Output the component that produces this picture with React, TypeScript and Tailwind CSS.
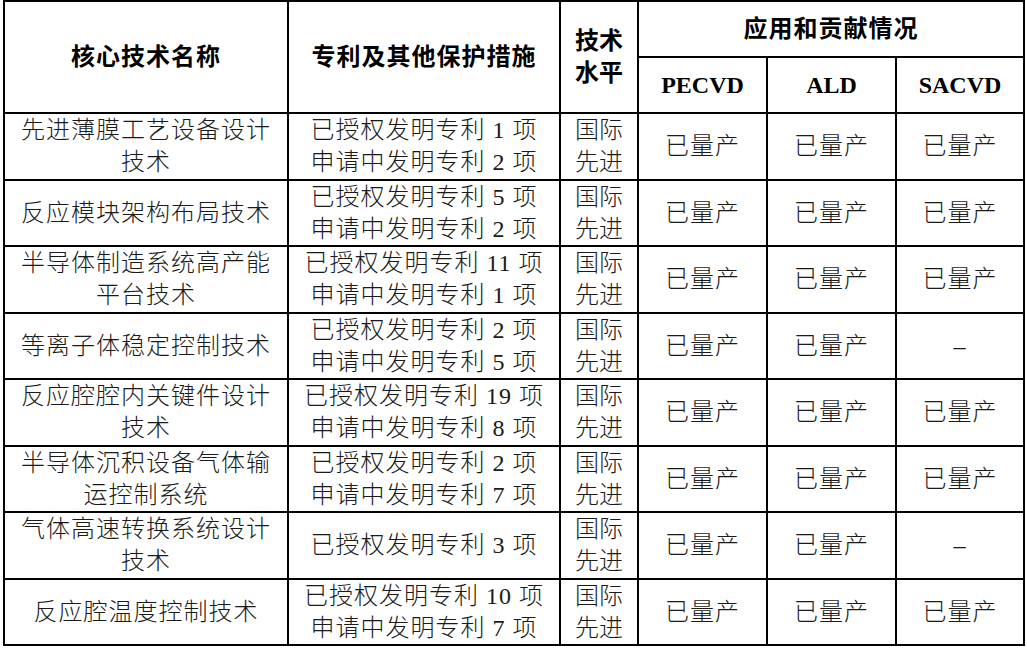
const FONT = "font-['Liberation_Serif','Noto_Sans_CJK_SC',serif]";

type Row = {
  name: string[];
  patents: string[];
  level: string[];
  apps: string[];
};

const ROWS: Row[] = [
  {
    name: ["先进薄膜工艺设备设计", "技术"],
    patents: ["已授权发明专利 1 项", "申请中发明专利 2 项"],
    level: ["国际", "先进"],
    apps: ["已量产", "已量产", "已量产"],
  },
  {
    name: ["反应模块架构布局技术"],
    patents: ["已授权发明专利 5 项", "申请中发明专利 2 项"],
    level: ["国际", "先进"],
    apps: ["已量产", "已量产", "已量产"],
  },
  {
    name: ["半导体制造系统高产能", "平台技术"],
    patents: ["已授权发明专利 11 项", "申请中发明专利 1 项"],
    level: ["国际", "先进"],
    apps: ["已量产", "已量产", "已量产"],
  },
  {
    name: ["等离子体稳定控制技术"],
    patents: ["已授权发明专利 2 项", "申请中发明专利 5 项"],
    level: ["国际", "先进"],
    apps: ["已量产", "已量产", "–"],
  },
  {
    name: ["反应腔腔内关键件设计", "技术"],
    patents: ["已授权发明专利 19 项", "申请中发明专利 8 项"],
    level: ["国际", "先进"],
    apps: ["已量产", "已量产", "已量产"],
  },
  {
    name: ["半导体沉积设备气体输", "运控制系统"],
    patents: ["已授权发明专利 2 项", "申请中发明专利 7 项"],
    level: ["国际", "先进"],
    apps: ["已量产", "已量产", "已量产"],
  },
  {
    name: ["气体高速转换系统设计", "技术"],
    patents: ["已授权发明专利 3 项"],
    level: ["国际", "先进"],
    apps: ["已量产", "已量产", "–"],
  },
  {
    name: ["反应腔温度控制技术"],
    patents: ["已授权发明专利 10 项", "申请中发明专利 7 项"],
    level: ["国际", "先进"],
    apps: ["已量产", "已量产", "已量产"],
  },
];

function Lines({ lines }: { lines: string[] }) {
  return (
    <>
      {lines.map((l, i) => (
        <span key={i} className="block whitespace-nowrap">
          {l}
        </span>
      ))}
    </>
  );
}

const cell =
  "flex flex-col items-center justify-center bg-white text-center leading-[32px]";

export default function App() {
  return (
    <div className={`min-h-[651px] w-[1027px] bg-white ${FONT} text-[24px] text-[#1a1a1a]`}>
      <div className="ml-[3px] grid w-[1022px] grid-cols-[282px_270px_76px_127px_127px_126px] grid-rows-[54px_54px_repeat(8,64.5px)] gap-[2px] bg-black p-[2px]">
        <div className={`${cell} row-span-2 font-bold tracking-[1px] text-black`}>核心技术名称</div>
        <div className={`${cell} row-span-2 font-bold tracking-[1px] text-black`}>专利及其他保护措施</div>
        <div className={`${cell} row-span-2 font-bold text-black`}>
          <Lines lines={["技术", "水平"]} />
        </div>
        <div className={`${cell} col-span-3 font-bold tracking-[1px] text-black`}>应用和贡献情况</div>
        <div className={`${cell} font-bold text-black`}>PECVD</div>
        <div className={`${cell} font-bold text-black`}>ALD</div>
        <div className={`${cell} font-bold text-black`}>SACVD</div>

        {ROWS.map((r, i) => (
          <div key={i} className="contents font-light">
            <div className={`${cell} tracking-[1px]`}>
              <Lines lines={r.name} />
            </div>
            <div className={`${cell} tracking-[1px]`}>
              <Lines lines={r.patents} />
            </div>
            <div className={cell}>
              <Lines lines={r.level} />
            </div>
            {r.apps.map((a, j) => (
              <div key={j} className={`${cell} tracking-[1px]`}>
                {a}
              </div>
            ))}
          </div>
        ))}
      </div>
    </div>
  );
}
